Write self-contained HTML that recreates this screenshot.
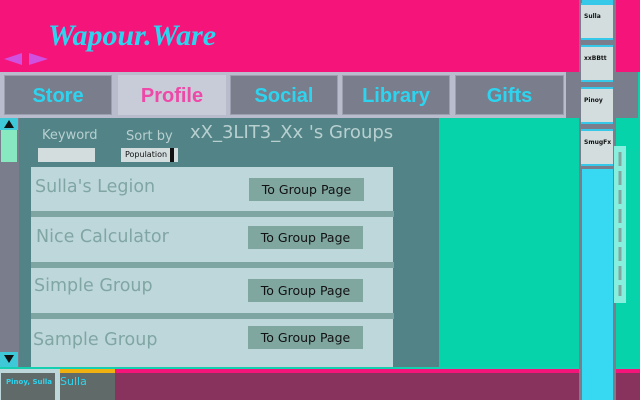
<!DOCTYPE html>
<html><head><meta charset="utf-8"><style>
*{margin:0;padding:0;box-sizing:border-box}
body{width:640px;height:400px;overflow:hidden;position:relative;background:#06d3aa;font-family:"DejaVu Sans","Liberation Sans",sans-serif}
.a{position:absolute}
.tab{position:absolute;top:75px;height:40px;background:#7a7e8c;border:1px solid #9aa0ae;font-family:"Liberation Sans",sans-serif;font-weight:bold;font-size:20px;color:#2dd4ef;text-align:center;line-height:40px}
.row{position:absolute;left:31px;width:362px;background:#bed7db}
.sep{position:absolute;left:31px;width:363px;height:6px;background:#7fa5a2}
.gn{position:absolute;font-size:17.5px;color:#80a6a3}
.btn{position:absolute;width:115px;height:23px;background:#80a6a0;color:#111;font-size:12.5px;text-align:center;line-height:23px}
.card{position:absolute;left:581px;width:32px;height:37px;background:#d3ddde;border-top:2px solid #36c8e8;border-bottom:2px solid #36c8e8;font-size:6px;font-weight:bold;color:#111;padding:8px 0 0 3px}
</style></head><body>
<div class="a" style="left:0;top:0;width:640px;height:72px;background:#f5147a"></div>
<div class="a" style="left:48px;top:19px;font-family:'Liberation Serif',serif;font-style:italic;font-weight:bold;font-size:30px;color:#2dd4ef">Wapour.Ware</div>
<svg class="a" style="left:2px;top:52px" width="48" height="14"><polygon points="2,7 20,1 20,13" fill="#d050e0"/><polygon points="27,1 46,7 27,13" fill="#d050e0"/></svg>
<div class="a" style="left:0;top:72px;width:566px;height:46px;background:#b8bccc"></div>
<div class="a" style="left:566px;top:72px;width:72px;height:46px;background:#7a7e8c"></div>
<div class="tab" style="left:4px;width:108px">Store</div>
<div class="tab" style="left:118px;width:108px;background:#c8ccd8;border-color:#c8ccd8;color:#ee48a8">Profile</div>
<div class="tab" style="left:230px;width:108px">Social</div>
<div class="tab" style="left:342px;width:108px">Library</div>
<div class="tab" style="left:455px;width:109px">Gifts</div>
<div class="a" style="left:0;top:118px;width:19px;height:250px;background:#7a7e8c"></div>
<div class="a" style="left:0;top:118px;width:18px;height:12px;background:#3ec8d8"></div>
<svg class="a" style="left:3px;top:119px" width="12" height="10"><polygon points="6,1 11,9 1,9" fill="#111"/></svg>
<div class="a" style="left:1px;top:130px;width:16px;height:32px;background:#88e8c0"></div>
<div class="a" style="left:0;top:352px;width:18px;height:15px;background:#3ec8d8"></div>
<svg class="a" style="left:3px;top:354px" width="12" height="10"><polygon points="1,1 11,1 6,9" fill="#111"/></svg>
<div class="a" style="left:19px;top:118px;width:420px;height:249px;background:#528487"></div>
<div class="a" style="left:42px;top:128px;font-size:13px;color:#b8cfd0">Keyword</div>
<div class="a" style="left:38px;top:148px;width:57px;height:14px;background:#d3ddde"></div>
<div class="a" style="left:126px;top:129px;font-size:13px;color:#b8cfd0">Sort by</div>
<div class="a" style="left:121px;top:148px;width:57px;height:14px;background:#d3ddde;font-size:8px;color:#111;padding:2px 0 0 4px">Population</div>
<div class="a" style="left:170px;top:148px;width:4px;height:14px;background:#111"></div>
<div class="a" style="left:190px;top:122px;font-size:18px;color:#b8cfd0">xX_3LIT3_Xx 's Groups</div>
<div class="row" style="top:167px;height:44px"></div>
<div class="sep" style="top:211px"></div>
<div class="row" style="top:217px;height:45px"></div>
<div class="sep" style="top:262px"></div>
<div class="row" style="top:268px;height:45px"></div>
<div class="sep" style="top:313px"></div>
<div class="row" style="top:319px;height:48px"></div>
<div class="gn" style="left:35px;top:177px">Sulla's Legion</div>
<div class="gn" style="left:36px;top:227px">Nice Calculator</div>
<div class="gn" style="left:34px;top:276px">Simple Group</div>
<div class="gn" style="left:33px;top:330px">Sample Group</div>
<div class="btn" style="left:249px;top:178px">To Group Page</div>
<div class="btn" style="left:248px;top:226px">To Group Page</div>
<div class="btn" style="left:248px;top:279px">To Group Page</div>
<div class="btn" style="left:248px;top:326px">To Group Page</div>
<div class="a" style="left:0;top:367px;width:640px;height:2px;background:#14d0b0"></div>
<div class="a" style="left:0;top:369px;width:640px;height:4px;background:#f5147a"></div>
<div class="a" style="left:0;top:373px;width:640px;height:27px;background:#88325e"></div>
<div class="a" style="left:0;top:369px;width:55px;height:31px;background:#606a68;border-top:4px solid #bed7db;border-left:1px solid #bed7db;font-size:7px;font-weight:bold;color:#2dd4ef;padding:5px 0 0 5px">Pinoy, Sulla</div>
<div class="a" style="left:55px;top:369px;width:5px;height:31px;background:#bed7db"></div>
<div class="a" style="left:60px;top:369px;width:55px;height:31px;background:#606a68;border-top:4px solid #f0b010;font-size:11px;color:#2dd4ef;padding:2px 0 0 0">Sulla</div>
<div class="a" style="left:579px;top:0;width:37px;height:400px;background:#7a7e8c"></div>
<div class="a" style="left:582px;top:0;width:31px;height:3px;background:#36c8e8"></div>
<div class="card" style="top:3px">Sulla</div>
<div class="card" style="top:45px">xxBBtt</div>
<div class="card" style="top:87px">Pinoy</div>
<div class="card" style="top:129px">SmugFx</div>
<div class="a" style="left:582px;top:169px;width:31px;height:231px;background:#36d8f2"></div>
<div class="a" style="left:614px;top:146px;width:12px;height:157px;background:#88eedd"></div>
<svg class="a" style="left:614px;top:146px" width="12" height="157"><line x1="6" y1="6" x2="6" y2="150" stroke="#80a6a0" stroke-width="3" stroke-dasharray="14,5"/></svg>
</body></html>
